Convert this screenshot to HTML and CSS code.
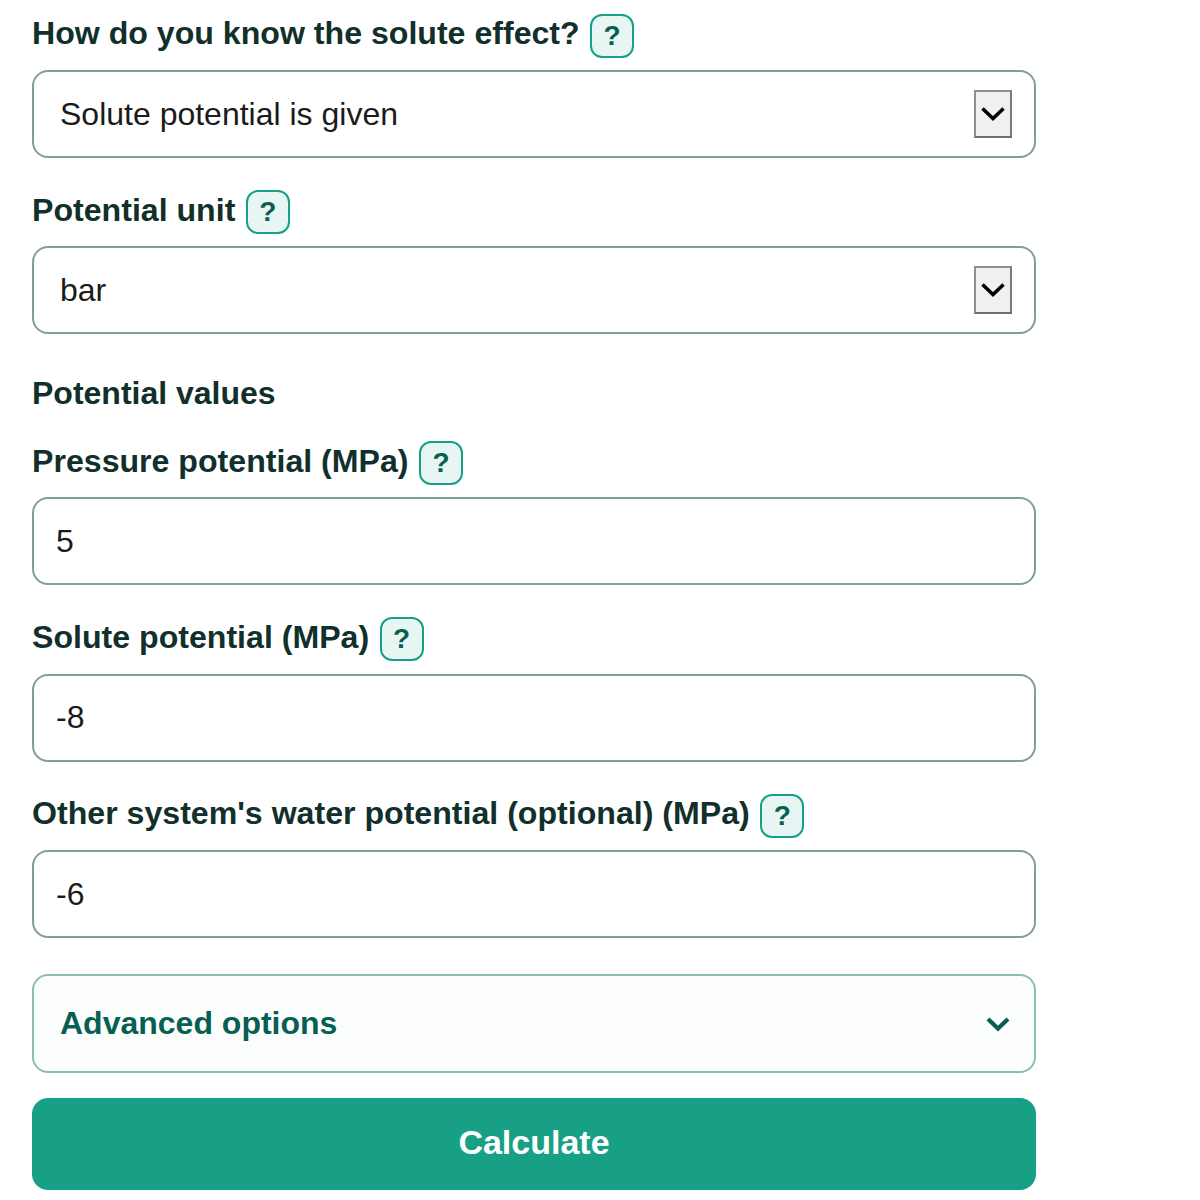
FILE: index.html
```html
<!DOCTYPE html>
<html lang="en">
<head>
  <meta charset="UTF-8" />
  <title>Water potential calculator</title>
  <link rel="stylesheet" href="styles.css">
</head>
<body>

  <form class="calc">
    <div class="field">
      <div class="label-row">
        <label>How do you know the solute effect?</label>
        <span class="help">?</span>
      </div>
      <div class="box select">
        <span>Solute potential is given</span>
        <span class="arrow">
          <svg width="24" height="16" viewBox="0 0 24 16"><path d="M1.500 2.500l10.500 10 10.500-10" fill="none" stroke="#000" stroke-width="3.600"/></svg>
        </span>
      </div>
    </div>

    <div class="field">
      <div class="label-row">
        <label>Potential unit</label>
        <span class="help">?</span>
      </div>
      <div class="box select">
        <span>bar</span>
        <span class="arrow">
          <svg width="24" height="16" viewBox="0 0 24 16"><path d="M1.500 2.500l10.500 10 10.500-10" fill="none" stroke="#000" stroke-width="3.600"/></svg>
        </span>
      </div>
    </div>

    <h2 class="group-title">Potential values</h2>

    <div class="field">
      <div class="label-row">
        <label>Pressure potential (MPa)</label>
        <span class="help">?</span>
      </div>
      <div class="box input">5</div>
    </div>

    <div class="field">
      <div class="label-row">
        <label>Solute potential (MPa)</label>
        <span class="help">?</span>
      </div>
      <div class="box input">-8</div>
    </div>

    <div class="field">
      <div class="label-row">
        <label>Other system's water potential (optional) (MPa)</label>
        <span class="help">?</span>
      </div>
      <div class="box input">-6</div>
    </div>

    <div class="advanced">
      <span>Advanced options</span>
      <svg width="24" height="16" viewBox="0 0 24 16"><path d="M2 3l10 9.500L22 3" fill="none" stroke="#065f52" stroke-width="4.200"/></svg>
    </div>

    <button type="button" class="calculate">Calculate</button>
  </form>

</body>
</html>
```

FILE: styles.css
```css
* {
  box-sizing: border-box;
}

body {
  margin: 0;
  background: white;
  font-family: "Liberation Sans", Arial, sans-serif;
  color: #12302b;
}

.calc {
  width: 1004px;
  margin-left: 32px;
  padding-top: 13.700px;
}

.field {
  margin-bottom: 32px;
}

.label-row {
  display: flex;
  align-items: center;
  gap: 10.500px;
  height: 44px;
  margin-bottom: 12.330px;
}

.label-row label {
  margin-bottom: 4px;
  font-size: 32.120px;
  font-weight: bold;
}

.help {
  width: 44px;
  height: 44px;
  display: flex;
  align-items: center;
  justify-content: center;
  background: #e8f6f3;
  border: 2px solid #17a085;
  border-radius: 12px;
  color: #065f52;
  font-size: 28px;
  font-weight: bold;
}

.box {
  height: 88px;
  display: flex;
  align-items: center;
  background: white;
  border: 2px solid #7f9f99;
  border-radius: 16px;
  color: #1b1b1b;
  font-size: 32px;
}

.select {
  justify-content: space-between;
  padding: 0 22px 0 26px;
}

.input {
  padding-left: 22px;
}

.arrow {
  width: 38px;
  height: 48px;
  display: flex;
  align-items: center;
  justify-content: center;
  background: #f0f0f0;
  border: 2px solid #8f8f8f;
  border-bottom-color: #6f6f6f;
  border-right-color: #7a7a7a;
}

.group-title {
  margin: 43px 0 30.700px;
  height: 33px;
  line-height: 33px;
  font-size: 32px;
  font-weight: bold;
}

.advanced {
  height: 99px;
  display: flex;
  align-items: center;
  justify-content: space-between;
  padding: 0 24px 0 26px;
  margin-top: 36px;
  margin-bottom: 25px;
  background: #fcfefd;
  border: 2px solid #8fbcb2;
  border-radius: 16px;
  color: #065f52;
  font-size: 32px;
  font-weight: bold;
}

.calculate {
  display: block;
  width: 100%;
  height: 92px;
  padding-bottom: 4px;
  background: #17a085;
  color: white;
  border: none;
  border-radius: 16px;
  font-family: inherit;
  font-size: 34px;
  font-weight: bold;
}
```
